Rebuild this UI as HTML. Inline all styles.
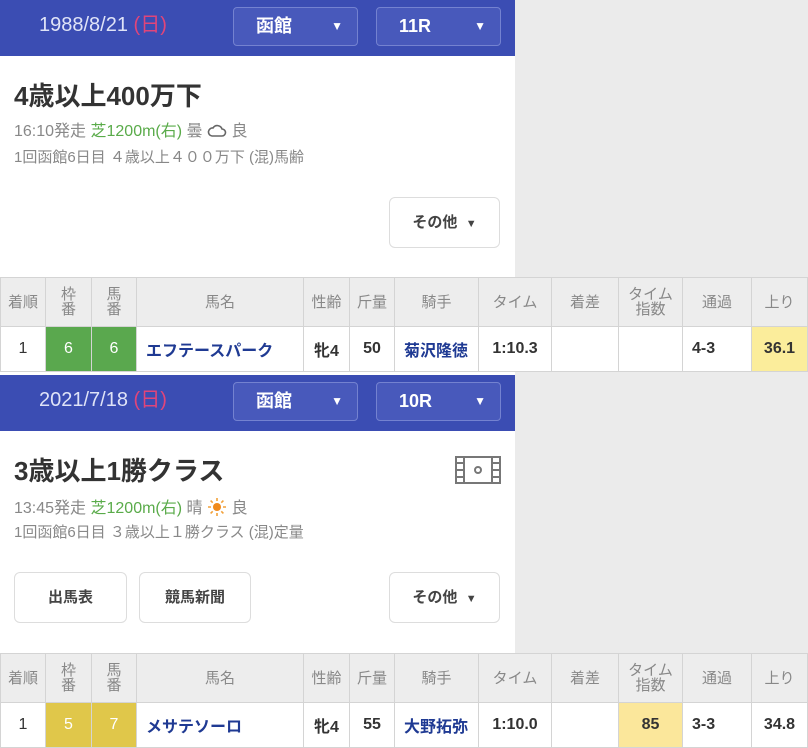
<!DOCTYPE html>
<html><head><meta charset="utf-8"><style>
*{margin:0;padding:0;box-sizing:border-box}
body{width:808px;height:743px;overflow:hidden;background:#ebebeb;font-family:"Liberation Sans","Noto Sans CJK JP",sans-serif;position:relative}
.abs{position:absolute}
.panel{position:absolute;left:0;width:515px;background:#fff}
.hdr{position:absolute;left:0;width:515px;height:56px;background:#3b4db3}
.date{position:absolute;left:39px;top:12px;color:#dfe3f7;font-size:20px;line-height:26px}
.date span{color:#e0457a}
.sel{position:absolute;top:7px;height:39px;width:125px;border:1px solid #7482d0;border-radius:4px;background:#4859bb;color:#fff;font-weight:bold;font-size:18px;line-height:37px;padding-left:22px}
.sel i{position:absolute;right:14px;top:0;font-style:normal;font-size:12px}
.title{position:absolute;left:14px;font-size:26px;font-weight:bold;color:#333;line-height:32px}
.info{position:absolute;left:14px;font-size:16px;color:#888;white-space:nowrap;line-height:20px}
.g{color:#5aab4a}
.btn{position:absolute;height:51px;border:1px solid #ddd;border-radius:6px;background:#fff;font-size:15px;font-weight:bold;color:#444;text-align:center;line-height:49px}
table{position:absolute;left:0;width:808px;border-collapse:collapse;background:#fff}
td{border:1px solid #d4d4d4;text-align:center;font-size:16px;color:#333;padding:0}
tr.h td{background:#ededed;color:#888;height:49px;font-size:15px;line-height:15px}
tr.r td{height:45px;font-weight:bold}
.l{text-align:left;padding-left:9px;color:#1f3a93}
</style></head><body>
<div class="panel" style="top:0;height:277px"></div>
<div class="hdr" style="top:0"></div>
<div class="date">1988/8/21 <span>(日)</span></div>
<div class="sel" style="left:233px">函館<i>▼</i></div>
<div class="sel" style="left:376px">11R<i>▼</i></div>
<div class="title" style="top:80px">4歳以上400万下</div>
<div class="info" style="top:122px">16:10発走 <span class="g">芝1200m(右)</span> 曇 <svg width="20" height="16" viewBox="0 0 20 16" style="vertical-align:-2px"><path d="M5 14H15A3.5 3.5 0 0 0 15 7A5 5 0 0 0 6 6A4 4 0 0 0 5 14Z" fill="none" stroke="#666" stroke-width="1.6"/></svg> 良</div>
<div class="info" style="top:148px;font-size:15px">1回函館6日目 ４歳以上４００万下 (混)馬齢</div>
<div class="btn" style="left:389px;top:197px;width:111px">その他 &nbsp;<small style="font-size:11px">▼</small></div>
<table style="top:277px"><tr class="h"><td style="width:45px">着順</td><td style="width:46px">枠<br>番</td><td style="width:45px">馬<br>番</td><td style="width:167px">馬名</td><td style="width:46px">性齢</td><td style="width:45px">斤量</td><td style="width:84px">騎手</td><td style="width:73px">タイム</td><td style="width:67px">着差</td><td style="width:64px">タイム<br>指数</td><td style="width:69px">通過</td><td>上り</td></tr>
<tr class="r"><td style="font-weight:normal">1</td><td style="background:#5aa84e;color:#fff;font-weight:normal">6</td><td style="background:#5aa84e;color:#fff;font-weight:normal">6</td><td class="l">エフテースパーク</td><td>牝4</td><td>50</td><td class="l" style="color:#1f3a93">菊沢隆徳</td><td>1:10.3</td><td></td><td></td><td style="text-align:left;padding-left:9px">4-3</td><td style="background:#fbed9b">36.1</td></tr></table>

<div class="panel" style="top:372px;height:281px"></div>
<div class="hdr" style="top:375px"></div>
<div class="date" style="top:387px">2021/7/18 <span>(日)</span></div>
<div class="sel" style="left:233px;top:382px">函館<i>▼</i></div>
<div class="sel" style="left:376px;top:382px">10R<i>▼</i></div>
<div class="title" style="top:455px">3歳以上1勝クラス</div>
<svg class="abs" style="left:455px;top:456px" width="46" height="28" viewBox="0 0 46 28"><rect x="1" y="1" width="44" height="26" fill="none" stroke="#777" stroke-width="2"/><path d="M9 1V27M37 1V27M1 7H9M1 14H9M1 21H9M37 7H45M37 14H45M37 21H45" stroke="#777" stroke-width="2"/><circle cx="23" cy="14" r="3" fill="none" stroke="#777" stroke-width="2"/></svg>
<div class="info" style="top:497px">13:45発走 <span class="g">芝1200m(右)</span> 晴 <svg width="20" height="20" viewBox="0 0 20 20" style="vertical-align:-4px"><circle cx="10" cy="10" r="4" fill="#f08a1c"/><path d="M10 1V4M10 16V19M1 10H4M16 10H19M3.6 3.6L5.7 5.7M14.3 14.3L16.4 16.4M3.6 16.4L5.7 14.3M14.3 5.7L16.4 3.6" stroke="#f2a13a" stroke-width="1.6"/></svg> 良</div>
<div class="info" style="top:523px;font-size:15px">1回函館6日目 ３歳以上１勝クラス (混)定量</div>
<div class="btn" style="left:14px;top:572px;width:113px">出馬表</div>
<div class="btn" style="left:139px;top:572px;width:112px">競馬新聞</div>
<div class="btn" style="left:389px;top:572px;width:111px">その他 &nbsp;<small style="font-size:11px">▼</small></div>
<table style="top:653px"><tr class="h"><td style="width:45px">着順</td><td style="width:46px">枠<br>番</td><td style="width:45px">馬<br>番</td><td style="width:167px">馬名</td><td style="width:46px">性齢</td><td style="width:45px">斤量</td><td style="width:84px">騎手</td><td style="width:73px">タイム</td><td style="width:67px">着差</td><td style="width:64px">タイム<br>指数</td><td style="width:69px">通過</td><td>上り</td></tr>
<tr class="r"><td style="font-weight:normal">1</td><td style="background:#e0c74a;color:#fff;font-weight:normal">5</td><td style="background:#e0c74a;color:#fff;font-weight:normal">7</td><td class="l">メサテソーロ</td><td>牝4</td><td>55</td><td class="l">大野拓弥</td><td>1:10.0</td><td></td><td style="background:#fbe79b">85</td><td style="text-align:left;padding-left:9px">3-3</td><td>34.8</td></tr></table>
</body></html>
